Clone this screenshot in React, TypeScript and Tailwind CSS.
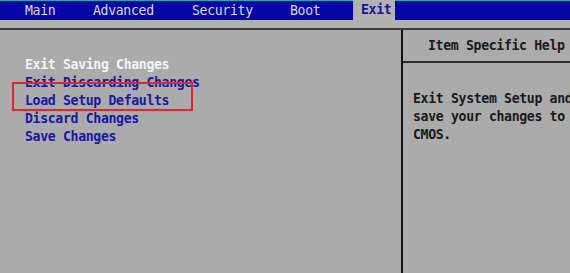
const tabs = [
  { label: 'Main', w: 'w-[68px]' },
  { label: 'Advanced', w: 'w-[99px]' },
  { label: 'Security', w: 'w-[98px]' },
  { label: 'Boot', w: 'w-[63px]' },
]

const items = [
  { label: 'Exit Saving Changes', active: true },
  { label: 'Exit Discarding Changes', active: false },
  { label: 'Load Setup Defaults', active: false },
  { label: 'Discard Changes', active: false },
  { label: 'Save Changes', active: false },
]

export default function App() {
  return (
    <div
      className="w-[570px] h-[273px] overflow-hidden bg-[#ababab] flex flex-col text-[13.2px] tracking-[-0.35px]"
      style={{ fontFamily: '"DejaVu Sans Mono", "Liberation Mono", monospace' }}
    >
      {/* Menu bar */}
      <div className="h-[20px] bg-[#0606a6] border-t border-[#28a6b4] flex items-stretch pl-[25px] shrink-0">
        {tabs.map((t) => (
          <div key={t.label} className={`${t.w} flex items-center text-[#d8d8e8]`}>
            {t.label}
          </div>
        ))}
        <div className="bg-[#b2b2b2] -mt-px pl-[8px] pr-[4px] flex items-center text-[#14149a] font-bold">Exit</div>
      </div>

      <div className="h-[8px] bg-[#b0b0b0] shrink-0" />
      <div className="h-[2px] bg-[#3a3a3a] shrink-0" />

      {/* Body */}
      <div className="flex flex-1 min-h-0 font-bold">
        <div className="relative w-[401px] shrink-0 pt-[26px] pl-[25px]">
          {items.map((it) => (
            <div
              key={it.label}
              className={`h-[18px] leading-[18px] whitespace-pre ${it.active ? 'text-[#f4f4f4]' : 'text-[#1818a0]'}`}
            >
              {it.label}
            </div>
          ))}
          {/* annotation box */}
          <div className="absolute left-[12px] top-[52px] w-[181px] h-[29px] border-2 border-[#e0282c]" />
        </div>

        <div className="flex-1 border-l-2 border-[#101010] flex flex-col">
          <div className="h-[33px] flex items-center pl-[25px] text-[#1a1a1a] border-b-2 border-[#2a2a2a] whitespace-pre">
            Item Specific Help
          </div>
          <div className="pt-[27px] pl-[10px] text-[#1a1a1a] whitespace-pre">
            <div className="h-[18px] leading-[18px]">Exit System Setup and</div>
            <div className="h-[18px] leading-[18px]">save your changes to</div>
            <div className="h-[18px] leading-[18px]">CMOS.</div>
          </div>
        </div>
      </div>
    </div>
  )
}
